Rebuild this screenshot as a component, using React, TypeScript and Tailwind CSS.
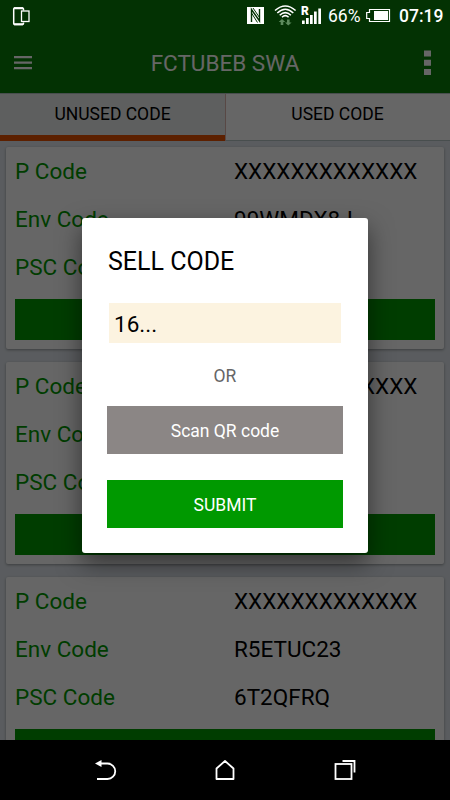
type CodeEntry = { pCode: string; envCode?: string; pscCode?: string };

const codes: CodeEntry[] = [
  { pCode: 'XXXXXXXXXXXXX', envCode: '99WMDX8J' },
  { pCode: 'XXXXXXXXXXXXX' },
  { pCode: 'XXXXXXXXXXXXX', envCode: 'R5ETUC23', pscCode: '6T2QFRQ' },
];

function StatusBar() {
  return (
    <div className="absolute inset-x-0 top-0 z-20 flex h-[31px] items-center text-white">
      <svg className="ml-3 h-[22px] w-5" viewBox="0 0 20 22" fill="none" stroke="currentColor">
        <path d="M11.500 5.500V4Q11.500 3 10.500 3H2.500Q1.700 3 1.700 4V18.500Q1.700 19.500 2.500 19.500H10.500Q11.500 19.500 11.500 18.500V17.500" strokeWidth="1.5" />
        <path d="M2 3.300h9M2 19.300h9" strokeWidth="2" />
        <rect x="9.500" y="6" width="7.500" height="10.500" strokeWidth="1.3" />
      </svg>
      <div className="ml-auto flex items-center">
        <svg className="h-[31px] w-[82px]" viewBox="240 0 82 31">
          <rect x="247" y="7" width="17" height="17" fill="#fff" />
          <path d="M251.500 22V9.500L259.500 21V9" fill="none" stroke="#033203" strokeWidth="1.4" />
          <path d="M253 8L259.500 17.500M251.500 13L257.500 22.500" fill="none" stroke="#033203" strokeWidth="1" />
          <g fill="none" stroke="#fff" strokeWidth="1.5">
            <path d="M275 10.500Q285.300 1.500 295.600 10.500" />
            <path d="M277.300 13Q285.300 5.500 293.300 13" />
            <path d="M279.700 15.300Q285.300 10 290.900 15.300" />
            <path d="M282 17.300Q285.300 14 288.600 17.300" />
          </g>
          <path d="M282 19l3.300 3h-2v3h-2.600v-3h-2zM288.300 25.500l-3.300-3h2v-3h2.600v3h2z" fill="#5c8a5c" />
          <text x="301" y="14.500" fontFamily="Roboto, sans-serif" fontSize="12" fontWeight="900" fill="#fff">R</text>
          <path d="M302 20.500h2.700V24H302zM306 18h2.700v6H306zM310 15h2.700v9H310zM314 11.500h2.700V24H314zM318.300 8.500h2.700V24h-2.700z" fill="#fff" />
        </svg>
        <span className="ml-1.5 w-[37px] pt-0.5 text-[17.5px] leading-none">66%</span>
        <svg className="h-[31px] w-[26px]" viewBox="365 0 26 31" fill="none">
          <path d="M369.500 9.500H389.500V21.500H369.500V18.500H366.700V12.500H369.500Z" stroke="#fff" strokeWidth="1.200" />
          <rect x="374" y="11" width="14" height="9" fill="#fff" />
        </svg>
        <span className="ml-2 w-[51px] pt-0.5 text-[17.5px] leading-none font-medium">07:19</span>
      </div>
    </div>
  );
}

function Header() {
  return (
    <header className="flex h-[93px] shrink-0 items-center justify-between bg-[#087d08] pt-[33px] text-white">
      <svg className="ml-3.5 h-5 w-[76px]" viewBox="0 0 76 20" fill="currentColor">
        <path d="M0 3h18v2.300H0zM0 8.500h18v2.300H0zM0 14h18v2.300H0z" />
      </svg>
      <h1 className="text-[22.5px] leading-none">FCTUBEB SWA</h1>
      <svg className="mr-[19px] h-[26px] w-[71px]" viewBox="0 0 71 26" fill="currentColor">
        <path d="M64 .5h7v6h-7zM64 9.700h7v6h-7zM64 18.900h7v6h-7z" />
      </svg>
    </header>
  );
}

function Tabs() {
  return (
    <nav className="grid h-12 shrink-0 grid-cols-2 border-y border-[#b5c4c2] bg-white text-center text-[17.5px] leading-[41px] text-black">
      <div className="border-b-[6px] border-[#e65000] bg-[#ebeeed]">UNUSED CODE</div>
      <div className="border-l border-[#dcb5ad] pr-px">USED CODE</div>
    </nav>
  );
}

function CodeCard({ entry }: { entry: CodeEntry }) {
  const rows = [
    { label: 'P Code', value: entry.pCode },
    { label: 'Env Code', value: entry.envCode },
    { label: 'PSC Code', value: entry.pscCode },
  ];

  return (
    <div className="h-[202px] shrink-0 rounded-xs bg-white px-[9px] pt-px shadow-[0_1px_3px_rgba(0,0,0,0.35)]">
      {rows.map((row) => (
        <div key={row.label} className="grid h-12 grid-cols-[219px_1fr] items-center text-[22.5px]">
          <span className="text-[#009900]">{row.label}</span>
          <span className="text-black">{row.value}</span>
        </div>
      ))}
      <div className="mt-[7px] h-[41px] bg-[#009900]" />
    </div>
  );
}

function SellDialog() {
  return (
    <div className="flex h-[335px] w-[286px] flex-col rounded-[3px] bg-white px-[25px] shadow-[0_10px_24px_rgba(0,0,0,0.5)]">
      <h2 className="mt-[29px] pl-px text-[25px] leading-[30px] text-black">SELL CODE</h2>
      <div className="mx-0.5 mt-[26px] h-10 bg-[#fcf3e0] pl-[5px] text-[22.5px] leading-[42px] text-black">
        16...
      </div>
      <p className="mt-[21px] text-center text-[17.5px] leading-6 text-[#666]">OR</p>
      <button className="mt-[18px] h-12 bg-[#8b8685] pt-0.5 text-[17.5px] text-white">Scan QR code</button>
      <button className="mt-[26px] h-12 bg-[#009900] pt-0.5 text-[17.5px] text-white">SUBMIT</button>
    </div>
  );
}

function NavBar() {
  return (
    <div className="relative z-20 grid h-[60px] shrink-0 grid-cols-[1fr_120px_120px_120px_1fr] items-center justify-items-center bg-black text-white">
      <svg className="col-start-2 h-6 w-6" viewBox="0 0 24 24" fill="none" stroke="currentColor" strokeWidth="1.8">
        <path d="M6 5.500H14.500A7.600 7.600 0 0 1 14.500 21H4" />
        <path d="M2 5.500L8.500 2V9Z" fill="currentColor" stroke="none" />
      </svg>
      <svg className="h-6 w-6" viewBox="0 0 24 24" fill="none" stroke="currentColor" strokeWidth="1.8" strokeLinejoin="round">
        <path d="M3.500 21V10.500L12 3L20.500 10.500V21Z" />
      </svg>
      <svg className="h-6 w-6" viewBox="0 0 24 24" fill="none" stroke="currentColor" strokeWidth="1.8">
        <rect x="2.500" y="6" width="16" height="15" />
        <path d="M9.500 3H21.500V14.500" />
      </svg>
    </div>
  );
}

export default function App() {
  return (
    <div className="relative flex h-[800px] w-[450px] flex-col overflow-hidden bg-[#e1e7ed] font-[Roboto,sans-serif]">
      <StatusBar />
      <div className="relative flex h-[740px] shrink-0 flex-col overflow-hidden">
        <Header />
        <Tabs />
        <main className="flex flex-col gap-[13px] px-1.5 pt-1.5">
          {codes.map((entry, index) => (
            <CodeCard key={index} entry={entry} />
          ))}
        </main>
        <div className="absolute inset-0 flex items-center justify-center bg-black/60 pt-[31px]">
          <SellDialog />
        </div>
      </div>
      <NavBar />
    </div>
  );
}
